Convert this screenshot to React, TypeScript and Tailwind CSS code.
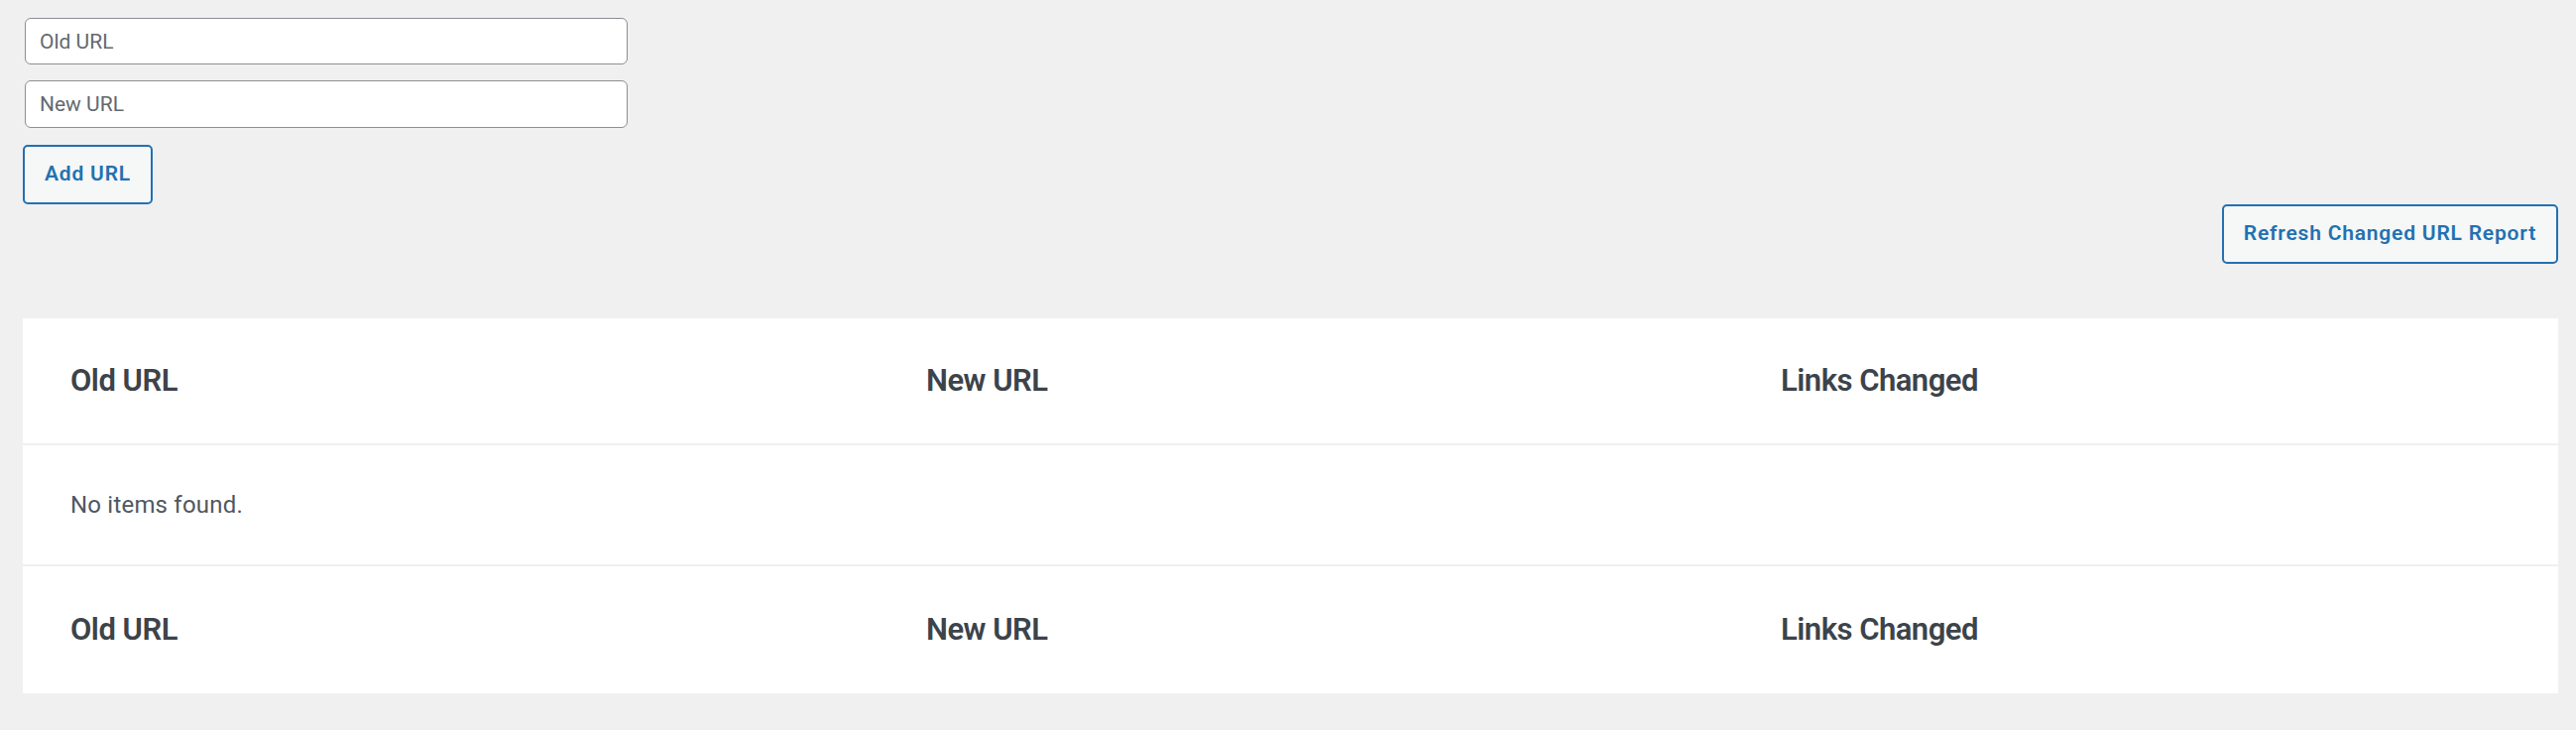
const columns = ["Old URL", "New URL", "Links Changed"];

function HeaderRow({ bordered }: { bordered?: boolean }) {
  return (
    <div
      className={
        "grid grid-cols-[863px_862px_1fr] h-[128px] items-center" +
        (bordered ? " border-b-2 border-[#f0f0f1]" : "")
      }
    >
      {columns.map((c) => (
        <div key={c} className="pl-[48px] text-[31px] font-semibold tracking-[-0.5px] text-[#3c434a]">
          {c}
        </div>
      ))}
    </div>
  );
}

export default function App() {
  return (
    <div
      className="min-h-screen bg-[#f0f0f1] pl-[23px] pr-[18px] pt-[18px] pb-[38px]"
      style={{ fontFamily: "Roboto, 'Open Sans', sans-serif" }}
    >
      <div className="flex flex-col gap-[16px] w-[608px] ml-[2px]">
        <input
          type="text"
          placeholder="Old URL"
          className="h-[47px] rounded-[6px] border border-[#8c8f94] bg-white px-[14px] text-[21px] text-[#2c3338] placeholder:text-[#646970] outline-none"
        />
        <input
          type="text"
          placeholder="New URL"
          className="h-[48px] rounded-[6px] border border-[#8c8f94] bg-white px-[14px] text-[21px] text-[#2c3338] placeholder:text-[#646970] outline-none"
        />
      </div>

      <button className="mt-[17px] h-[60px] px-[20px] rounded-[5px] border-2 border-[#2271b1] bg-[#f6f7f7] text-[21px] font-semibold tracking-[0.8px] text-[#2271b1]">
        Add URL
      </button>

      <div className="flex justify-end">
        <button className="h-[60px] px-[20px] rounded-[5px] border-2 border-[#2271b1] bg-[#f6f7f7] text-[21px] font-semibold tracking-[0.8px] text-[#2271b1]">
          Refresh Changed URL Report
        </button>
      </div>

      <div className="mt-[55px] bg-white">
        <HeaderRow bordered />
        <div className="h-[122px] flex items-center border-b-2 border-[#f0f0f1] pl-[48px] text-[24px] tracking-[0.2px] text-[#50575e]">
          No items found.
        </div>
        <HeaderRow />
      </div>
    </div>
  );
}
